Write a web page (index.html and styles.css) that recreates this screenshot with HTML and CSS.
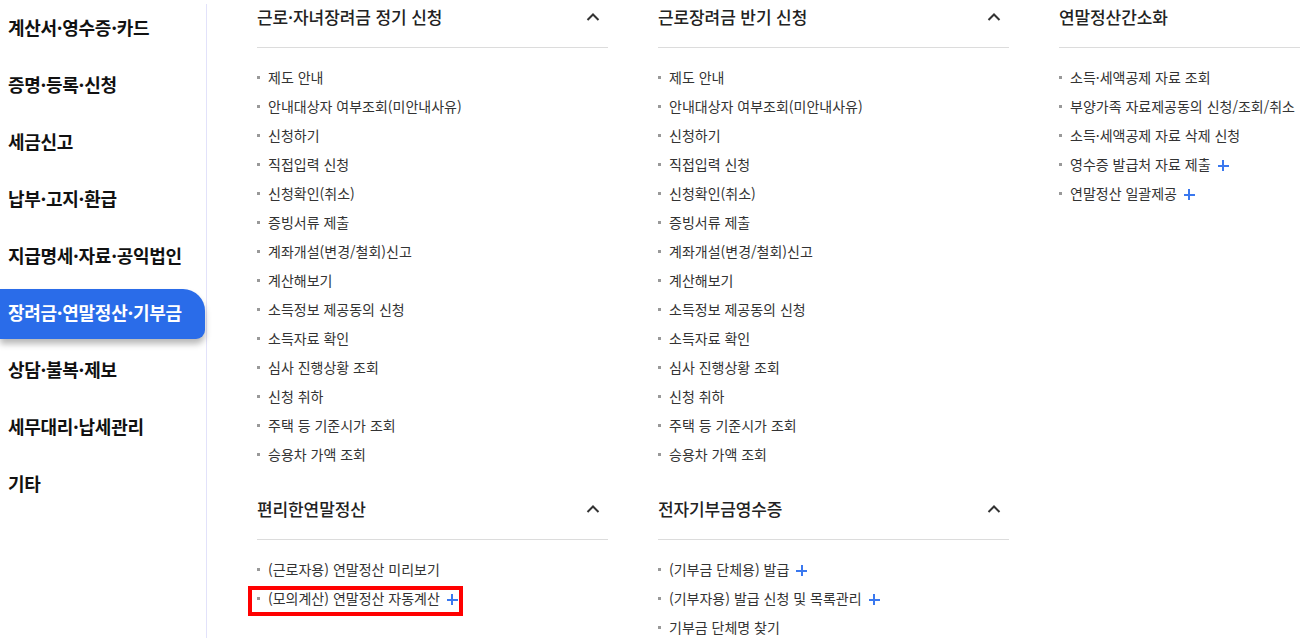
FILE: index.html
```html
<!DOCTYPE html>
<html lang="ko">
<head>
<meta charset="utf-8">
<title>메뉴</title>
<link rel="stylesheet" href="styles.css">
</head>
<body>
<div class="page">
  <nav class="side">
    <a class="side-item">계산서·영수증·카드</a>
    <a class="side-item">증명·등록·신청</a>
    <a class="side-item">세금신고</a>
    <a class="side-item">납부·고지·환급</a>
    <a class="side-item">지급명세·자료·공익법인</a>
    <a class="side-item active">장려금·연말정산·기부금</a>
    <a class="side-item">상담·불복·제보</a>
    <a class="side-item">세무대리·납세관리</a>
    <a class="side-item">기타</a>
  </nav>
  <main class="cols">
    <div class="col">
      <section class="sec">
        <h3 class="sec-head">근로·자녀장려금 정기 신청<svg class="chev" viewBox="0 0 14 8" width="14" height="8"><polyline points="1.5,7 7,1.5 12.5,7"/></svg></h3>
        <ul class="list">
          <li>제도 안내</li>
          <li>안내대상자 여부조회(미안내사유)</li>
          <li>신청하기</li>
          <li>직접입력 신청</li>
          <li>신청확인(취소)</li>
          <li>증빙서류 제출</li>
          <li>계좌개설(변경/철회)신고</li>
          <li>계산해보기</li>
          <li>소득정보 제공동의 신청</li>
          <li>소득자료 확인</li>
          <li>심사 진행상황 조회</li>
          <li>신청 취하</li>
          <li>주택 등 기준시가 조회</li>
          <li>승용차 가액 조회</li>
        </ul>
      </section>
      <section class="sec">
        <h3 class="sec-head">편리한연말정산<svg class="chev" viewBox="0 0 14 8" width="14" height="8"><polyline points="1.5,7 7,1.5 12.5,7"/></svg></h3>
        <ul class="list">
          <li>(근로자용) 연말정산 미리보기</li>
          <li class="hl">(모의계산) 연말정산 자동계산<span class="plus"></span></li>
        </ul>
      </section>
    </div>
    <div class="col">
      <section class="sec">
        <h3 class="sec-head">근로장려금 반기 신청<svg class="chev" viewBox="0 0 14 8" width="14" height="8"><polyline points="1.5,7 7,1.5 12.5,7"/></svg></h3>
        <ul class="list">
          <li>제도 안내</li>
          <li>안내대상자 여부조회(미안내사유)</li>
          <li>신청하기</li>
          <li>직접입력 신청</li>
          <li>신청확인(취소)</li>
          <li>증빙서류 제출</li>
          <li>계좌개설(변경/철회)신고</li>
          <li>계산해보기</li>
          <li>소득정보 제공동의 신청</li>
          <li>소득자료 확인</li>
          <li>심사 진행상황 조회</li>
          <li>신청 취하</li>
          <li>주택 등 기준시가 조회</li>
          <li>승용차 가액 조회</li>
        </ul>
      </section>
      <section class="sec">
        <h3 class="sec-head">전자기부금영수증<svg class="chev" viewBox="0 0 14 8" width="14" height="8"><polyline points="1.5,7 7,1.5 12.5,7"/></svg></h3>
        <ul class="list">
          <li>(기부금 단체용) 발급<span class="plus"></span></li>
          <li>(기부자용) 발급 신청 및 목록관리<span class="plus"></span></li>
          <li>기부금 단체명 찾기</li>
        </ul>
      </section>
    </div>
    <div class="col col-last">
      <section class="sec">
        <h3 class="sec-head">연말정산간소화</h3>
        <ul class="list">
          <li>소득·세액공제 자료 조회</li>
          <li>부양가족 자료제공동의 신청/조회/취소</li>
          <li>소득·세액공제 자료 삭제 신청</li>
          <li>영수증 발급처 자료 제출<span class="plus"></span></li>
          <li>연말정산 일괄제공<span class="plus"></span></li>
        </ul>
      </section>
    </div>
  </main>
</div>
</body>
</html>
```

FILE: styles.css
```css
* { box-sizing: border-box; }
html, body { margin: 0; padding: 0; background: #fff; }
body {
  font-family: "Noto Sans CJK KR", "Noto Sans", sans-serif;
  color: #222;
  width: 1300px;
  height: 638px;
  overflow: hidden;
}
.page {
  display: flex;
  align-items: flex-start;
  height: 638px;
}
.side {
  width: 207px;
  flex: none;
  margin-top: 4px;
  height: 634px;
  border-right: 1px solid #e2e2fa;
  display: flex;
  flex-direction: column;
  gap: 7px;
  padding-top: 0;
}
.side-item {
  display: flex;
  align-items: center;
  width: 205px;
  height: 50px;
  padding-left: 8px;
  padding-bottom: 4px;
  font-size: 18px;
  font-weight: 700;
  color: #111;
  letter-spacing: -0.3px;
  white-space: nowrap;
}
.side-item.active {
  background: #2a6ce9;
  color: #fff;
  border-radius: 0 22px 9px 0;
  box-shadow: 0 5px 6px rgba(0, 0, 0, 0.28);
}
.cols {
  display: flex;
  gap: 50px;
  padding-left: 50px;
  flex: 1;
}
.col { width: 351px; flex: none; }
.col-last { width: auto; flex: 1; }
.sec-head {
  margin: 0;
  height: 48px;
  line-height: 34px;
  font-size: 17px;
  font-weight: 500;
  color: #222;
  border-bottom: 1px solid #dcdcdc;
  display: flex;
  justify-content: space-between;
  align-items: flex-start;
  padding-right: 8px;
  letter-spacing: -0.1px;
}
.chev {
  margin-top: 13px;
  fill: none;
  stroke: #333;
  stroke-width: 2;
}
.list {
  list-style: none;
  margin: 0;
  padding: 15px 0 23px 0;
}
.list li {
  position: relative;
  height: 29px;
  line-height: 29px;
  padding-left: 11px;
  font-size: 14px;
  color: #333;
  white-space: nowrap;
}
.list li::before {
  content: "";
  position: absolute;
  left: 0;
  top: 13px;
  width: 3px;
  height: 3px;
  background: #999;
}
.plus {
  display: inline-block;
  position: relative;
  width: 11px;
  height: 11px;
  margin-left: 7px;
  vertical-align: -1px;
}
.plus::before, .plus::after {
  content: "";
  position: absolute;
  background: #3a78ef;
}
.plus::before { left: 0; top: 4.5px; width: 11px; height: 2px; }
.plus::after { left: 4.5px; top: 0; width: 2px; height: 11px; }
.list li.hl { width: fit-content; }
.list li.hl::after {
  content: "";
  position: absolute;
  left: -9px;
  right: -5px;
  top: 2px;
  bottom: -3px;
  border: 4px solid #f00;
}
```
